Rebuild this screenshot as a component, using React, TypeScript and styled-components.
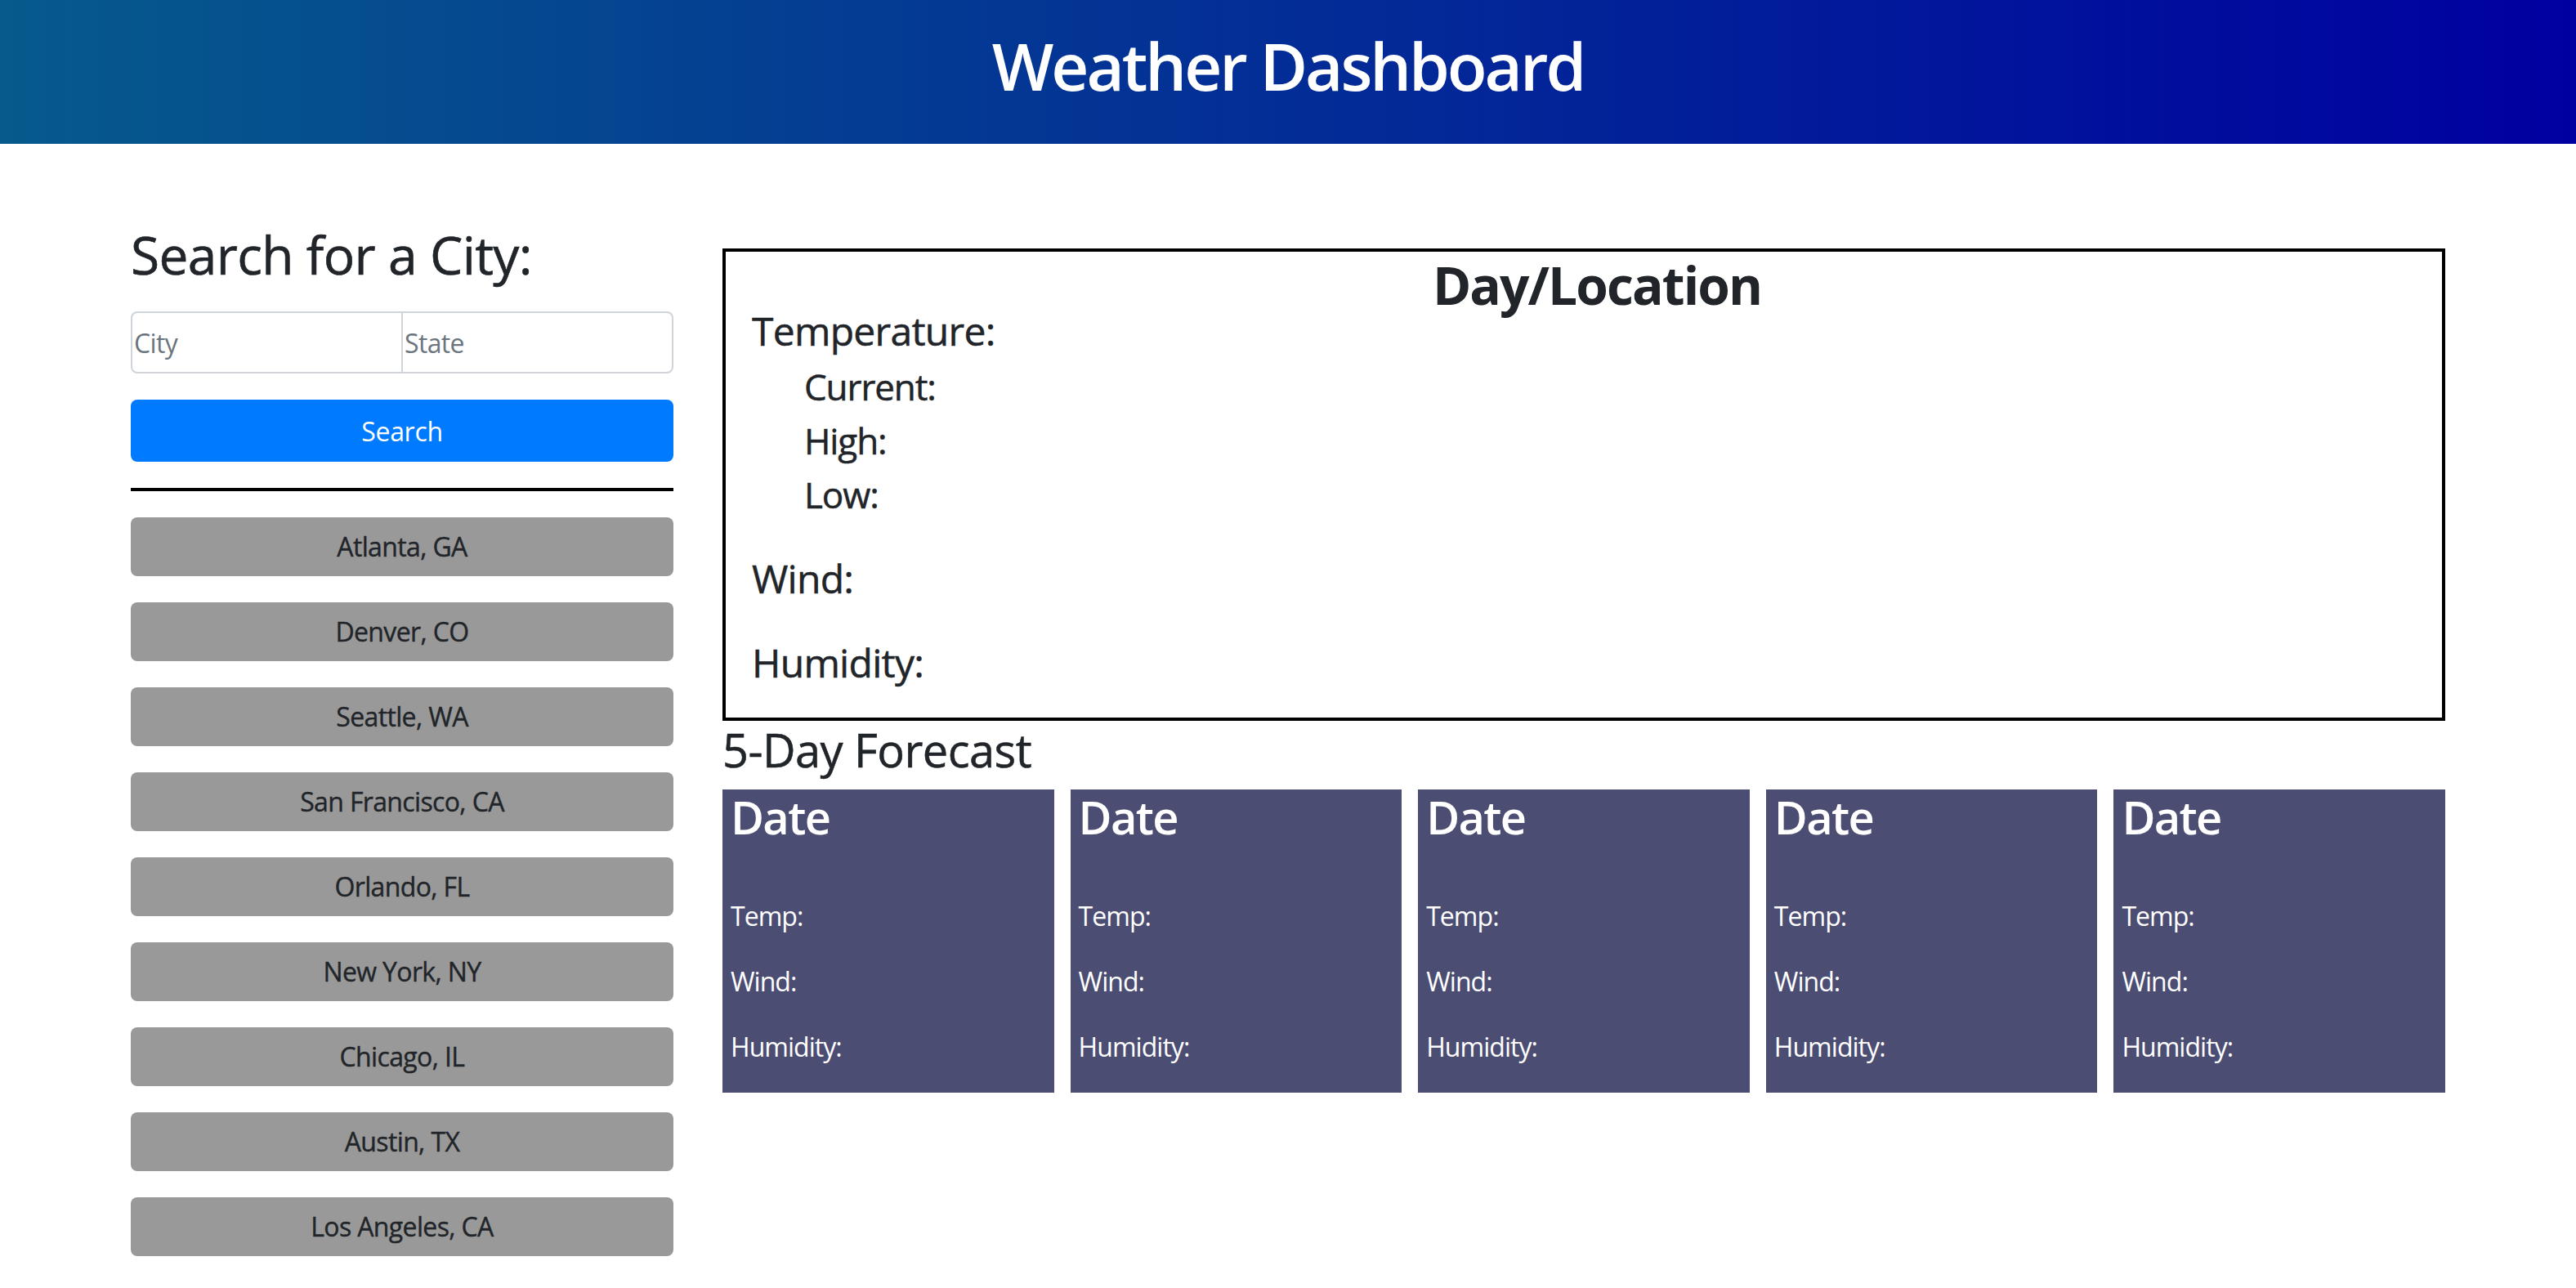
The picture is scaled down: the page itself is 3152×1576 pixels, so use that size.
import React from "react";
import styled, { createGlobalStyle } from "styled-components";

const GlobalStyle = createGlobalStyle`
  *, *::before, *::after { box-sizing: border-box; }
  html, body { margin: 0; padding: 0; background: #ffffff; }
  body {
    font-family: "Open Sans", "Noto Sans", "Liberation Sans", Arial, sans-serif;
    color: #212529;
    overflow: hidden;
  }
`;

const Header = styled.header`
  height: 176px;
  display: flex;
  align-items: center;
  justify-content: center;
  background: linear-gradient(to right, #065a8c, #0000a0);
`;

const Title = styled.h1`
  margin: 0 0 16px;
  font-size: 80px;
  line-height: 96px;
  font-weight: 600;
  color: #ffffff;
  letter-spacing: -0.038em;
`;

const Main = styled.main`
  display: flex;
  align-items: flex-start;
  gap: 60px;
  padding: 96px 160px 0;
`;

const Sidebar = styled.aside`
  flex: none;
  width: 664px;
  display: flex;
  flex-direction: column;
`;

const SearchHeading = styled.h2`
  margin: 0 0 29px;
  font-size: 64px;
  line-height: 80px;
  font-weight: 400;
  letter-spacing: -0.01em;
  -webkit-text-stroke: 0.6px #212529;
`;

const InputGroup = styled.div`
  display: flex;
  height: 76px;
`;

const TextInput = styled.input<{ $side: "left" | "right" }>`
  flex: 1;
  min-width: 0;
  height: 76px;
  margin-left: ${(p) => (p.$side === "right" ? "-2px" : "0")};
  padding: 0 0 0 2px;
  border: 2px solid #ced4da;
  border-radius: ${(p) => (p.$side === "left" ? "8px 0 0 8px" : "0 8px 8px 0")};
  font-family: inherit;
  font-size: 32px;
  letter-spacing: -0.02em;
  color: #495057;
  background: #ffffff;
  outline: none;
  &::placeholder {
    color: #6c757d;
  }
`;

const SearchButton = styled.button`
  margin-top: 32px;
  height: 76px;
  border: none;
  border-radius: 8px;
  background: #007bff;
  color: #ffffff;
  font-family: inherit;
  font-size: 32px;
  letter-spacing: -0.01em;
  cursor: pointer;
`;

const Divider = styled.hr`
  margin: 32px 0;
  height: 4px;
  border: 0;
  background: #000000;
`;

const CityList = styled.div`
  display: flex;
  flex-direction: column;
  gap: 32px;
`;

const CityButton = styled.button`
  height: 72px;
  border: none;
  border-radius: 8px;
  background: #999999;
  color: #212529;
  font-family: inherit;
  font-size: 32px;
  line-height: 48px;
  font-weight: 400;
  letter-spacing: -0.02em;
  -webkit-text-stroke: 0.4px #212529;
  cursor: pointer;
`;

const Content = styled.section`
  flex: 1;
  min-width: 0;
  display: flex;
  flex-direction: column;
`;

const CurrentBox = styled.div`
  margin-top: 32px;
  border: 4px solid #000000;
  padding: 18px 0 34px 32px;
`;

const LocationTitle = styled.h2`
  margin: 0;
  text-align: center;
  font-size: 64px;
  line-height: 46px;
  font-weight: 700;
  letter-spacing: -0.03em;
`;

const StatHeading = styled.h4<{ $spaced?: boolean }>`
  margin: ${(p) => (p.$spaced ? "37px 0 0" : "0")};
  font-size: 48px;
  line-height: 66px;
  font-weight: 400;
  letter-spacing: -0.015em;
  -webkit-text-stroke: 0.5px #212529;
`;

const SubList = styled.ul`
  margin: 2px 0 0 64px;
  padding: 0;
  list-style: none;
`;

const SubItem = styled.li`
  font-size: 44px;
  line-height: 66px;
  font-weight: 400;
  letter-spacing: -0.025em;
  -webkit-text-stroke: 0.5px #212529;
`;

const ForecastHeading = styled.h3`
  margin: 0 0 14px;
  font-size: 56px;
  line-height: 70px;
  font-weight: 400;
  letter-spacing: -0.01em;
  -webkit-text-stroke: 0.5px #212529;
`;

const CardRow = styled.div`
  display: grid;
  grid-template-columns: repeat(5, 1fr);
  gap: 20px;
`;

const Card = styled.div`
  background: #4c4d72;
  color: #ffffff;
  padding: 0 10px;
`;

const CardDate = styled.h3`
  margin: 0 0 64px;
  font-size: 56px;
  line-height: 67px;
  font-weight: 600;
  letter-spacing: -0.03em;
`;

const CardLine = styled.p`
  margin: 0 0 32px;
  font-size: 32px;
  line-height: 48px;
  letter-spacing: -0.03em;
`;

const cities = [
  "Atlanta, GA",
  "Denver, CO",
  "Seattle, WA",
  "San Francisco, CA",
  "Orlando, FL",
  "New York, NY",
  "Chicago, IL",
  "Austin, TX",
  "Los Angeles, CA",
];

export default function App() {
  return (
    <>
      <GlobalStyle />
      <Header>
        <Title>Weather Dashboard</Title>
      </Header>
      <Main>
        <Sidebar>
          <SearchHeading>Search for a City:</SearchHeading>
          <InputGroup>
            <TextInput $side="left" placeholder="City" />
            <TextInput $side="right" placeholder="State" />
          </InputGroup>
          <SearchButton>Search</SearchButton>
          <Divider />
          <CityList>
            {cities.map((c) => (
              <CityButton key={c}>{c}</CityButton>
            ))}
          </CityList>
        </Sidebar>
        <Content>
          <CurrentBox>
            <LocationTitle>Day/Location</LocationTitle>
            <StatHeading>Temperature:</StatHeading>
            <SubList>
              <SubItem>Current:</SubItem>
              <SubItem>High:</SubItem>
              <SubItem>Low:</SubItem>
            </SubList>
            <StatHeading $spaced>Wind:</StatHeading>
            <StatHeading $spaced>Humidity:</StatHeading>
          </CurrentBox>
          <ForecastHeading>5-Day Forecast</ForecastHeading>
          <CardRow>
            {[0, 1, 2, 3, 4].map((i) => (
              <Card key={i}>
                <CardDate>Date</CardDate>
                <CardLine>Temp:</CardLine>
                <CardLine>Wind:</CardLine>
                <CardLine>Humidity:</CardLine>
              </Card>
            ))}
          </CardRow>
        </Content>
      </Main>
    </>
  );
}
